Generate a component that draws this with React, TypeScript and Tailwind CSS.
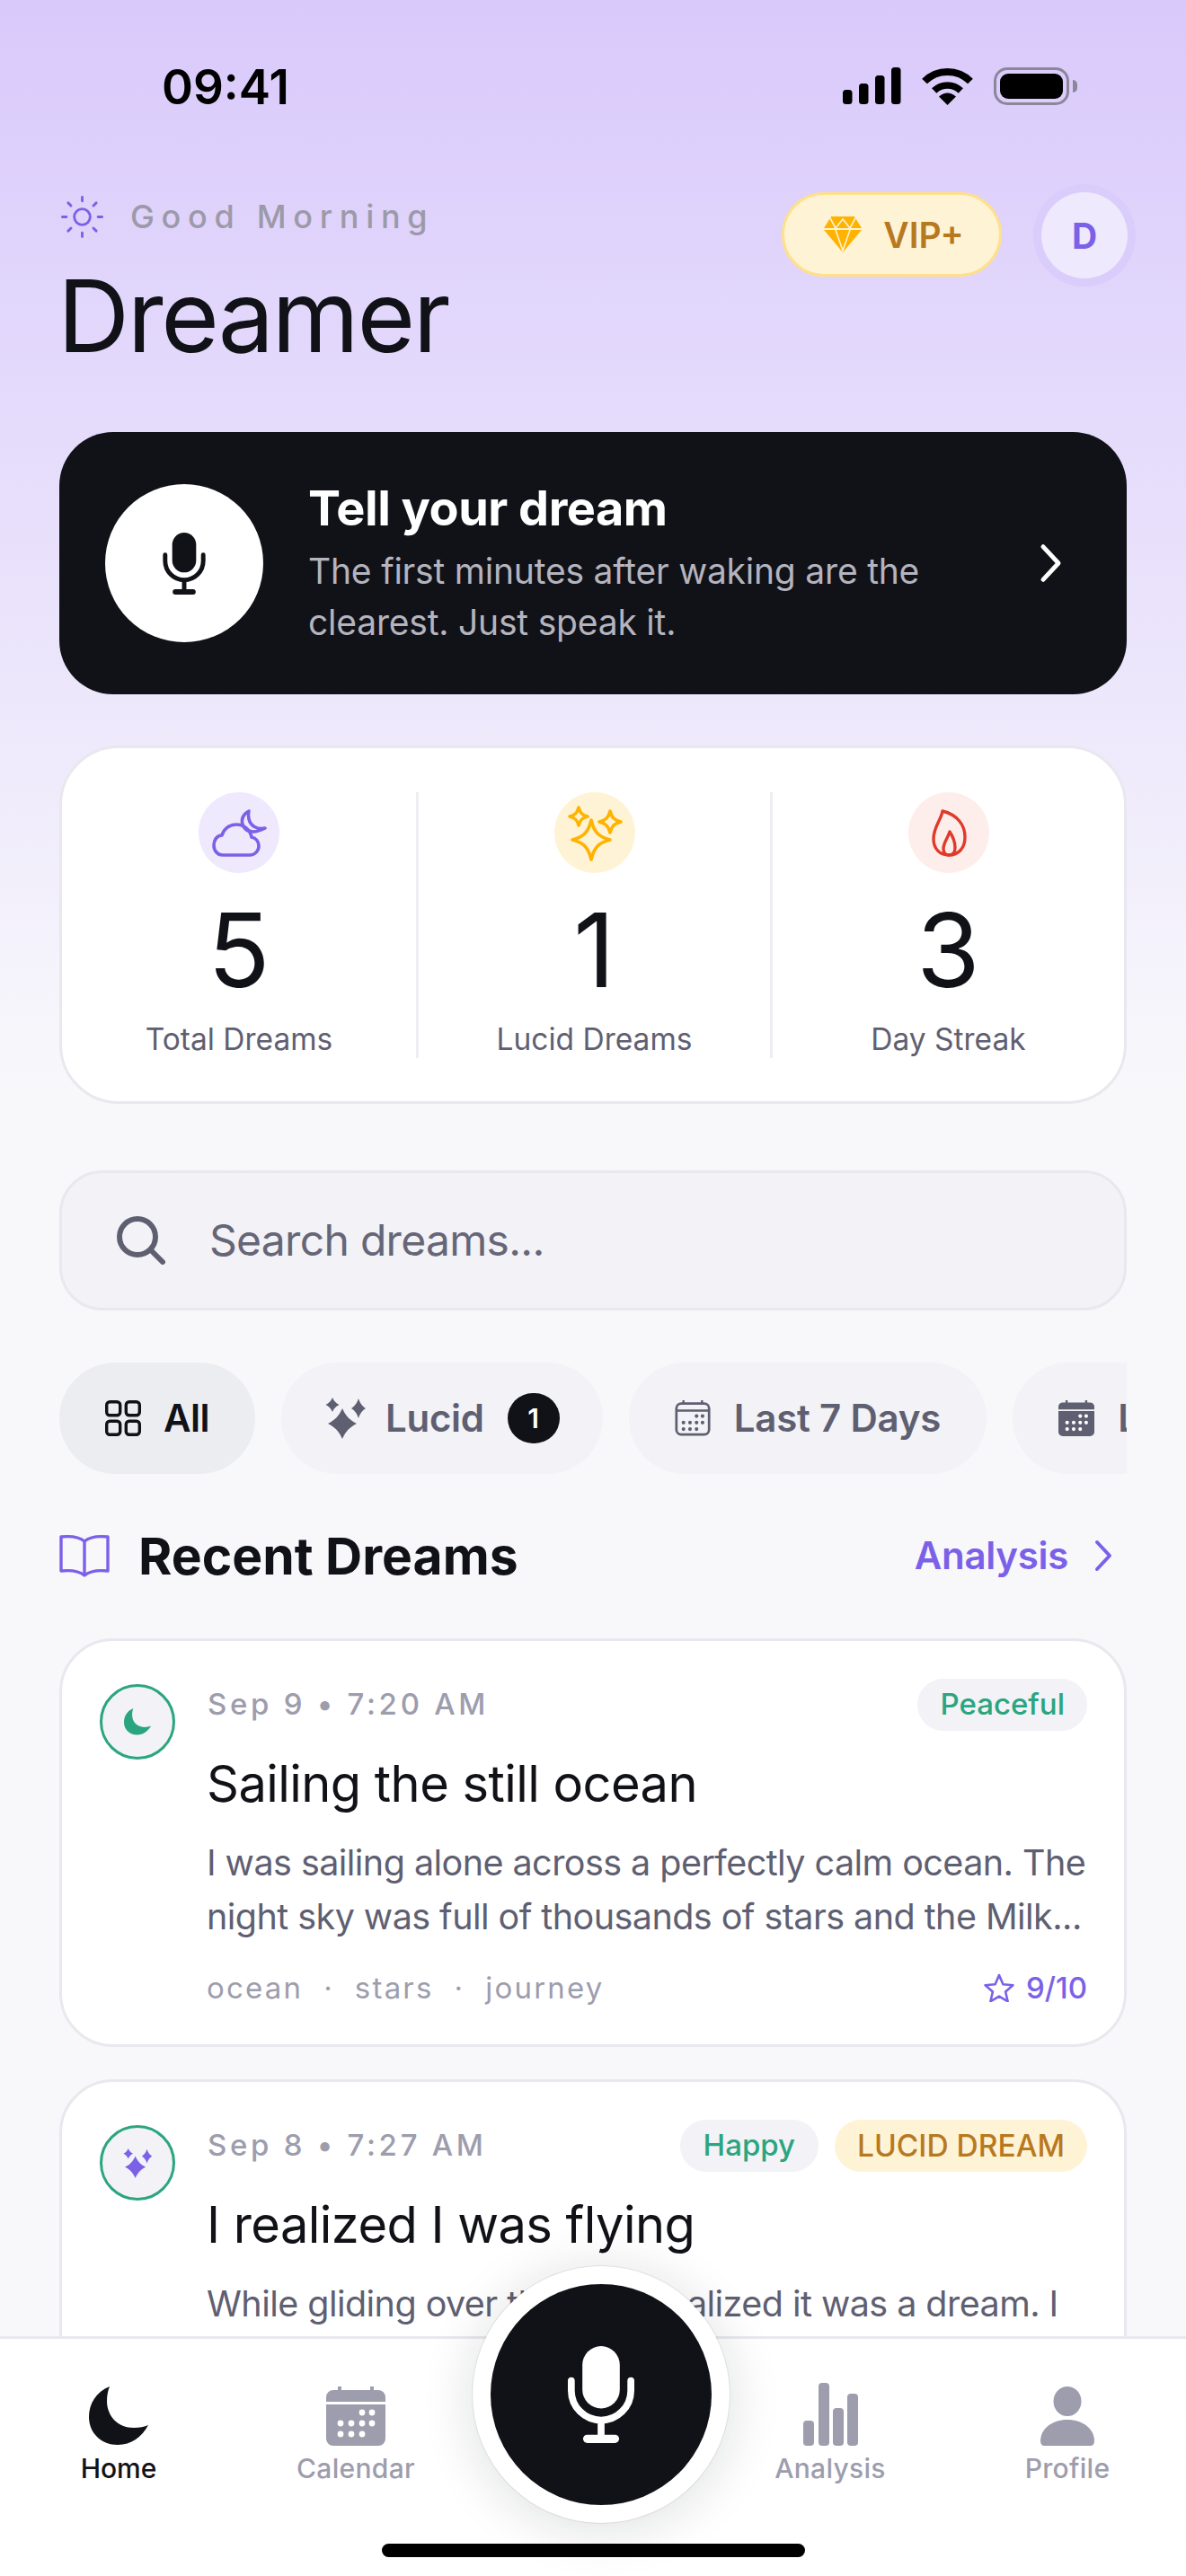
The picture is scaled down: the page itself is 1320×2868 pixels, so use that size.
import { Sun } from 'lucide-react'

// four-pointed star, used by all the sparkle icons
const star = (cx: number, cy: number, rx: number, ry: number, a = 0.14, b = 0.4) =>
  `M${cx} ${cy - ry}C${cx + rx * a} ${cy - ry * b} ${cx + rx * b} ${cy - ry * a} ${cx + rx} ${cy}` +
  `C${cx + rx * b} ${cy + ry * a} ${cx + rx * a} ${cy + ry * b} ${cx} ${cy + ry}` +
  `C${cx - rx * a} ${cy + ry * b} ${cx - rx * b} ${cy + ry * a} ${cx - rx} ${cy}` +
  `C${cx - rx * b} ${cy - ry * a} ${cx - rx * a} ${cy - ry * b} ${cx} ${cy - ry}Z`

function MicIcon({ className }: { className: string }) {
  return (
    <svg viewBox="0 0 48 70" className={className} fill="none">
      <rect x="10.5" y="0" width="27" height="45" rx="13.5" fill="currentColor" />
      <path d="M2.5 25v7a21.5 21.5 0 0 0 43 0v-7" stroke="currentColor" strokeWidth="5" strokeLinecap="round" />
      <path d="M24 54v12" stroke="currentColor" strokeWidth="5" />
      <rect x="11" y="64" width="26" height="6" rx="3" fill="currentColor" />
    </svg>
  )
}

function MoonIcon({ className }: { className: string }) {
  return (
    <svg viewBox="0 0 66 66" className={className} fill="currentColor">
      <path d="M23 0C8 6 0 19 0 34c0 18 14 31 32 31 15 0 27-9 34-22-4 2-10 3-16 3-18 0-30-13-30-30 0-6 1-11 3-16Z" />
    </svg>
  )
}

function SparklesFilled({ className }: { className: string }) {
  return (
    <svg viewBox="0 0 46 46" className={className} fill="currentColor">
      <path d={star(19, 29, 16, 17, 0.24, 0.5)} />
      <path d={star(8, 8, 7.5, 8, 0.24, 0.5)} />
      <path d={star(37, 12, 8, 11, 0.24, 0.5)} />
    </svg>
  )
}

function CalendarDots({ outline, className }: { outline?: boolean; className: string }) {
  const dots = [
    [40, 29], [51, 29],
    [16, 41], [28, 41], [40, 41], [51, 41],
    [16, 53], [28, 53], [40, 53],
  ]
  return (
    <svg viewBox="0 0 66 66" className={className} fill="currentColor">
      {outline ? (
        <>
          <rect x="3" y="6" width="60" height="57" rx="9" fill="none" stroke="currentColor" strokeWidth="4.5" />
          <path d="M3 17h60v4H3z" />
          <path d="M14 0h4v7h-4zM48 0h4v7h-4z" />
        </>
      ) : (
        <>
          <path d="M8 4h5V0h4v4h32V0h4v4h5a8 8 0 0 1 8 8v5H0v-5a8 8 0 0 1 8-8Z" />
          <path d="M0 20h66v38a8 8 0 0 1-8 8H8a8 8 0 0 1-8-8Z" />
        </>
      )}
      {dots.map(([x, y]) => (
        <circle key={`${x}-${y}`} cx={x} cy={y} r="3.4" fill={outline ? 'currentColor' : 'white'} />
      ))}
    </svg>
  )
}

function Chevron({ className }: { className: string }) {
  return (
    <svg viewBox="0 0 20 36" className={className} fill="none" stroke="currentColor" strokeWidth="4" strokeLinecap="round" strokeLinejoin="round">
      <path d="M3 3l14 15L3 33" />
    </svg>
  )
}

function StatusBar() {
  return (
    <div className="flex h-[214px] items-start justify-between pl-[180px] pr-[121px] pt-[71px]">
      <span className="text-[53px] leading-[52px] font-semibold text-black">09:41</span>
      <div className="flex items-start pt-[4px]">
        <svg viewBox="0 0 65 41" className="h-[41px] w-[65px]" fill="black">
          <rect x="0" y="25" width="10.5" height="16" rx="3.5" />
          <rect x="18" y="18" width="10.5" height="23" rx="3.5" />
          <rect x="36" y="9" width="10.5" height="32" rx="3.5" />
          <rect x="54" y="0" width="10.5" height="41" rx="3.5" />
        </svg>
        <svg viewBox="0 0 57 42" className="ml-[23px] h-[42px] w-[57px]">
          <path d="M3 15.5a36 36 0 0 1 51 0" fill="none" stroke="black" strokeWidth="8" />
          <path d="M13.7 26a21 21 0 0 1 29.6 0" fill="none" stroke="black" strokeWidth="7.5" />
          <path d="M28.5 42 19 32.5q9.5-8 19 0Z" fill="black" />
        </svg>
        <div className="ml-[23px] flex items-center">
          <div className="flex h-[42px] w-[84px] items-center justify-center rounded-[15px] border-[3px] border-[#8b8799] p-[4px]">
            <div className="h-full w-full rounded-[9px] bg-black" />
          </div>
          <div className="ml-[4px] h-[14px] w-[5px] rounded-r-full bg-[#8b8799]" />
        </div>
      </div>
    </div>
  )
}

function Header() {
  return (
    <div className="flex items-start justify-between pl-[66px] pr-[65px]">
      <div>
        <div className="flex h-[54px] items-center">
          <Sun size={53} strokeWidth={1.3} className="-ml-[1px] text-[#7b61e8]" />
          <span className="ml-[27px] text-[36px] leading-[54px] font-medium tracking-[7.7px] text-[#9c9aa8]">Good Morning</span>
        </div>
        <h1 className="-ml-[2px] mt-[19px] text-[111px] leading-[130px] font-normal tracking-[-2.4px] text-[#111218]">Dreamer</h1>
      </div>
      <div className="flex items-start">
        <div className="flex h-[94px] w-[245px] items-center justify-center rounded-full border-[3px] border-[#ffe08a] bg-[#fff3d6] pl-[5px]">
          <svg viewBox="0 0 42 40" className="h-[40px] w-[42px]">
            <path d="M8 0h26l8 13H0Z" fill="#ffb300" />
            <path d="M0 15h42L21 40Z" fill="#ffb300" />
            <path d="M6 0l7 13 8-10 8 10 7-13M13 15l8 23 8-23" fill="none" stroke="#fff3d6" strokeWidth="1.6" />
          </svg>
          <span className="ml-[24px] text-[39px] leading-none font-semibold text-[#b7791f]">VIP+</span>
        </div>
        <div className="ml-[44px] flex h-[96px] w-[96px] items-center justify-center rounded-full bg-[#eee9fc] shadow-[0_0_0_9px_#dacdfb]">
          <span className="text-[39px] leading-none font-bold text-[#7b61e8]">D</span>
        </div>
      </div>
    </div>
  )
}

function TellCard() {
  return (
    <div className="mt-[64px] flex h-[292px] items-center rounded-[60px] bg-[#111218] pl-[51px] pr-[72px]">
      <div className="flex h-[176px] w-[176px] shrink-0 items-center justify-center rounded-full bg-white">
        <MicIcon className="h-[69px] w-[48px] text-[#111218]" />
      </div>
      <div className="ml-[50px] flex-1">
        <div className="-mt-[1px] text-[54px] leading-[68px] font-bold tracking-[-0.5px] text-white">Tell your dream</div>
        <p className="mt-[7px] text-[39px] leading-[57px] tracking-[-0.2px] text-[#b4b4be]">
          The first minutes after waking are the
          <br />
          clearest. Just speak it.
        </p>
      </div>
      <Chevron className="h-[44px] w-[25px] text-white" />
    </div>
  )
}

function CloudMoon() {
  return (
    <svg viewBox="0 0 90 90" className="h-[90px] w-[90px]" fill="none" stroke="#7b61e8" strokeWidth="3.6" strokeLinejoin="round">
      <path d="M27 70h30c6 0 10-5 10-10 0-5-3-9-8-10-2-9-9-14-17-14-8 0-14 5-16 12-6 0-9 6-9 11 0 6 4 11 10 11Z" />
      <path d="M56 21c-6 3-9 9-7 15 3 8 12 11 25 4-8 2-16-2-18-10-1-4-1-6 0-9Z" />
    </svg>
  )
}

function SparklesOutline() {
  return (
    <svg viewBox="0 0 90 90" className="h-[90px] w-[90px]" fill="none" stroke="#ffb300" strokeWidth="3.6" strokeLinejoin="round">
      <path d={star(41, 53, 21, 22)} />
      <path d={star(27, 27, 10, 10)} />
      <path d={star(62, 33, 12, 12)} />
    </svg>
  )
}

function Flame() {
  return (
    <svg viewBox="0 0 90 90" className="h-[90px] w-[90px]" fill="none" stroke="#e03a2a" strokeWidth="3.4" strokeLinejoin="round">
      <path d="M38 21c-1 9-10 17-10 31 0 11 7 18 17 18 11 0 18-8 18-20 0-14-9-25-25-29Z" />
      <path d="M46 44c-2 7-7 12-7 19 0 5 3 7 6 7 4 0 7-3 7-8 0-6-2-12-6-18Z" />
    </svg>
  )
}

const stats = [
  { value: '5', label: 'Total Dreams', bg: 'bg-[#eee9fc]', icon: <CloudMoon /> },
  { value: '1', label: 'Lucid Dreams', bg: 'bg-[#fff3d6]', icon: <SparklesOutline /> },
  { value: '3', label: 'Day Streak', bg: 'bg-[#feeeeb]', icon: <Flame /> },
]

function StatsCard() {
  return (
    <div className="mt-[57px] grid h-[399px] grid-cols-3 rounded-[66px] border-[3px] border-[#e8e8ee] bg-white pt-[49px]">
      {stats.map((s, i) => (
        <div key={s.label} className={`flex h-[296px] flex-col items-center ${i > 0 ? 'border-l-[3px] border-[#eeeef2]' : ''}`}>
          <div className={`flex h-[90px] w-[90px] items-center justify-center rounded-full ${s.bg}`}>{s.icon}</div>
          <div className="mt-[21px] text-[114px] leading-[130px] font-normal text-[#111218]">{s.value}</div>
          <div className="mt-[13px] text-[33.5px] leading-[42px] text-[#5f5f72]">{s.label}</div>
        </div>
      ))}
    </div>
  )
}

function SearchBar() {
  return (
    <div className="mt-[74px] flex h-[156px] items-center rounded-[48px] border-[3px] border-[#e8e8ee] bg-[#f2f2f7] pl-[61px]">
      <svg viewBox="0 0 54 54" className="h-[54px] w-[54px]" fill="none" stroke="#5f5f72" strokeWidth="6" strokeLinecap="round">
        <circle cx="23" cy="23" r="20" />
        <path d="M38 38l13 13" />
      </svg>
      <span className="ml-[49px] text-[48px] leading-none tracking-[-0.7px] text-[#666678]">Search dreams...</span>
    </div>
  )
}

function Chips() {
  return (
    <div className="mt-[58px] flex gap-[29px] overflow-hidden">
      <div className="flex h-[124px] shrink-0 items-center rounded-full bg-[#ecedf1] px-[51px]">
        <svg viewBox="0 0 40 40" className="h-[40px] w-[40px]" fill="none" stroke="#111218" strokeWidth="3.4">
          <rect x="1.7" y="1.7" width="15" height="15" rx="3.5" />
          <rect x="23.3" y="1.7" width="15" height="15" rx="3.5" />
          <rect x="1.7" y="23.3" width="15" height="15" rx="3.5" />
          <rect x="23.3" y="23.3" width="15" height="15" rx="3.5" />
        </svg>
        <span className="ml-[25px] text-[42px] leading-none font-semibold tracking-[-0.5px] text-[#111218]">All</span>
      </div>
      <div className="flex h-[124px] shrink-0 items-center rounded-full bg-[#f2f2f7] pl-[49px] pr-[48px] text-[#5f5f72]">
        <SparklesFilled className="h-[46px] w-[46px]" />
        <span className="ml-[21px] text-[42px] leading-none font-semibold tracking-[-0.3px]">Lucid</span>
        <span className="ml-[26px] flex h-[56px] w-[58px] items-center justify-center rounded-full bg-[#111218] text-[30px] font-semibold text-white">1</span>
      </div>
      <div className="flex h-[124px] shrink-0 items-center rounded-full bg-[#f2f2f7] px-[51px] text-[#5f5f72]">
        <CalendarDots outline className="h-[40px] w-[40px]" />
        <span className="ml-[26px] text-[42px] leading-none font-semibold tracking-[-0.2px]">Last 7 Days</span>
      </div>
      <div className="flex h-[124px] shrink-0 items-center rounded-full bg-[#f2f2f7] px-[51px] text-[#5f5f72]">
        <CalendarDots className="h-[40px] w-[40px]" />
        <span className="ml-[26px] text-[42px] leading-none font-semibold tracking-[-0.3px]">Last 30 Days</span>
      </div>
    </div>
  )
}

function SectionTitle() {
  return (
    <div className="mt-[59px] flex h-[64px] items-center justify-between pr-[16px]">
      <div className="flex items-center">
        <svg viewBox="0 0 56 48" className="h-[48px] w-[56px]" fill="none" stroke="#7b61e8" strokeWidth="3.4" strokeLinejoin="round">
          <path d="M28 8C22 3 12 2 2 3v38c10-1 20 0 26 5 6-5 16-6 26-5V3C44 2 34 3 28 8ZM28 8v38" />
        </svg>
        <h2 className="ml-[32px] text-[57px] leading-none font-bold text-[#111218]">Recent Dreams</h2>
      </div>
      <div className="flex items-center">
        <span className="text-[42px] leading-none font-semibold tracking-[-0.3px] text-[#7b61e8]">Analysis</span>
        <Chevron className="ml-[29px] h-[36px] w-[20px] text-[#7b61e8]" />
      </div>
    </div>
  )
}

function DreamCard({
  date,
  title,
  lines,
  icon,
  pills,
  footer,
  className,
}: {
  date: string
  title: string
  lines: string[]
  icon: React.ReactNode
  pills: React.ReactNode
  footer?: React.ReactNode
  className: string
}) {
  return (
    <div className={`rounded-[60px] border-[3px] border-[#e8e8ee] bg-white pb-[34px] pl-[42px] pr-[41px] pt-[42px] ${className}`}>
      <div className="flex">
        <div className="mt-[6px] flex h-[84px] w-[84px] shrink-0 items-center justify-center rounded-full border-[3px] border-[#2ba57f] bg-[#f2f2f7]">
          {icon}
        </div>
        <div className="ml-[36px] min-w-0 flex-1">
          <div className="flex h-[58px] items-center justify-between">
            <span className="text-[33px] font-medium tracking-[3.7px] text-[#9d9dad]">{date}</span>
            <div className="flex gap-[18px]">{pills}</div>
          </div>
          <h3 className="-ml-[1px] mt-[24px] text-[56px] leading-[70px] font-normal tracking-[-0.55px] text-[#111218]">{title}</h3>
          <p className="-ml-[1px] mt-[23px] text-[39.5px] leading-[60px] tracking-[-0.55px] whitespace-nowrap text-[#5f5f72]">
            {lines[0]}
            <br />
            {lines[1]}
          </p>
          {footer}
        </div>
      </div>
    </div>
  )
}

function NavBar() {
  return (
    <div className="absolute inset-x-0 bottom-0 h-[267px] border-t-[3px] border-[#e8e8ee] bg-white">
      <div className="grid grid-cols-5 pt-[50px]">
        <div className="flex flex-col items-center text-[#111218]">
          <div className="flex h-[72px] items-center"><MoonIcon className="h-[66px] w-[66px]" /></div>
          <span className="mt-[4px] text-[30px] leading-[36px] font-medium">Home</span>
        </div>
        <div className="flex flex-col items-center text-[#9d9dad]">
          <div className="flex h-[72px] items-center"><CalendarDots className="h-[66px] w-[66px]" /></div>
          <span className="mt-[4px] text-[30px] leading-[36px] font-medium tracking-[0.3px]">Calendar</span>
        </div>
        <div />
        <div className="flex flex-col items-center text-[#9d9dad]">
          <div className="-mt-[2px] flex h-[72px] items-center">
            <svg viewBox="0 0 61 70" className="h-[70px] w-[61px]" fill="currentColor">
              <rect x="0" y="42" width="12" height="28" rx="4" />
              <rect x="17" y="0" width="12" height="70" rx="4" />
              <rect x="33" y="28" width="12" height="42" rx="4" />
              <rect x="49" y="12" width="12" height="58" rx="4" />
            </svg>
          </div>
          <span className="mt-[6px] text-[30px] leading-[36px] font-medium tracking-[0.3px]">Analysis</span>
        </div>
        <div className="flex flex-col items-center text-[#9d9dad]">
          <div className="flex h-[72px] items-center">
            <svg viewBox="0 0 60 66" className="h-[66px] w-[60px]" fill="currentColor">
              <ellipse cx="30" cy="16.5" rx="15.5" ry="16.5" />
              <path d="M0 61c0-14 13-24 30-24s30 10 30 24c0 3-2 5-4 5H4c-2 0-4-2-4-5Z" />
            </svg>
          </div>
          <span className="mt-[4px] text-[30px] leading-[36px] font-medium tracking-[0.3px]">Profile</span>
        </div>
      </div>

      <div className="absolute -top-[81px] left-[669px] flex h-[286px] w-[286px] -translate-x-1/2 items-center justify-center rounded-full bg-white shadow-[0_0_0_1px_rgba(17,18,24,0.08),0_6px_60px_rgba(17,18,24,0.14)]">
        <div className="flex h-[246px] w-[246px] items-center justify-center rounded-full bg-[#111218]">
          <MicIcon className="h-[108px] w-[74px] text-white" />
        </div>
      </div>
      <div className="absolute bottom-[21px] left-[425px] h-[15px] w-[471px] rounded-full bg-black" />
    </div>
  )
}

export default function App() {
  return (
    <div className="relative h-[2868px] w-[1320px] overflow-hidden bg-[#f8f8fb] bg-linear-to-b from-[#d9c9fb] to-[#f8f8fb] to-[42%] font-['Inter',sans-serif]">
      <StatusBar />
      <Header />
      <main className="px-[66px]">
        <TellCard />
        <StatsCard />
        <SearchBar />
        <Chips />
        <SectionTitle />
        <DreamCard
          className="mt-[60px] h-[455px]"
          date="Sep 9 • 7:20 AM"
          title="Sailing the still ocean"
          lines={[
            'I was sailing alone across a perfectly calm ocean. The',
            'night sky was full of thousands of stars and the Milk...',
          ]}
          icon={<MoonIcon className="h-[30px] w-[30px] text-[#2ba57f]" />}
          pills={<span className="flex h-[58px] items-center rounded-full bg-[#f2f2f7] px-[25px] text-[33px] font-medium text-[#2ba57f]">Peaceful</span>}
          footer={
            <div className="mt-[26px] flex items-center justify-between">
              <span className="-ml-[1px] text-[33px] leading-[46px] tracking-[2.2px] whitespace-pre text-[#9d9dad]">{'ocean  ·  stars  ·  journey'}</span>
              <span className="flex items-center text-[33px] leading-[46px] font-medium text-[#7b61e8]">
                <svg viewBox="0 0 34 32" className="mr-[13px] h-[32px] w-[34px]" fill="none" stroke="currentColor" strokeWidth="2.6" strokeLinejoin="round">
                  <path d="M17 2l4.4 10.2 11 1-8.3 7.3 2.5 10.8L17 25.6 7.4 31.3l2.5-10.8L1.6 13.2l11-1Z" />
                </svg>
                9/10
              </span>
            </div>
          }
        />
        <DreamCard
          className="mt-[36px]"
          date="Sep 8 • 7:27 AM"
          title="I realized I was flying"
          lines={[
            'While gliding over the sea I realized it was a dream. I',
            'decided to fly higher until the clouds were far below...',
          ]}
          icon={<SparklesFilled className="h-[33px] w-[33px] text-[#7b61e8]" />}
          pills={
            <>
              <span className="flex h-[58px] items-center rounded-full bg-[#f2f2f7] px-[26px] text-[33px] font-medium text-[#2ba57f]">Happy</span>
              <span className="flex h-[58px] items-center rounded-full bg-[#fff3d6] px-[25px] text-[33.5px] font-medium text-[#b7791f]">LUCID DREAM</span>
            </>
          }
        />
      </main>
      <NavBar />
    </div>
  )
}
